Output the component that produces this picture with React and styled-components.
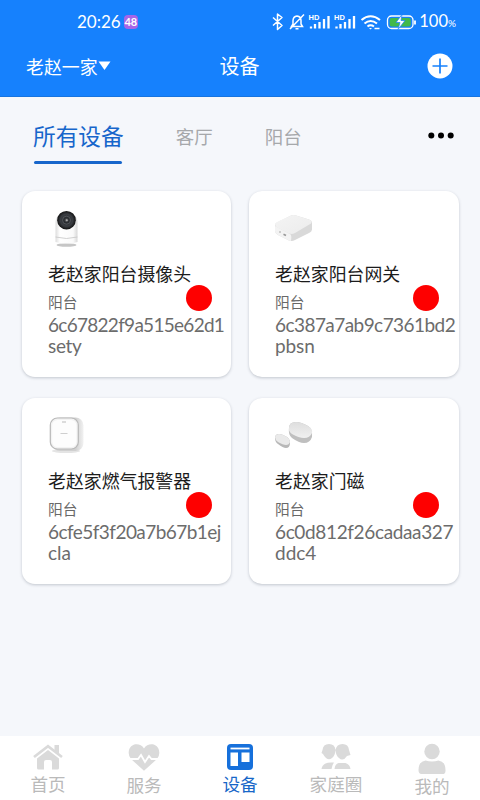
import React from 'react';
import styled, { createGlobalStyle } from 'styled-components';

const Global = createGlobalStyle`
  * { box-sizing: border-box; }
  html, body { margin: 0; padding: 0; }
  body { font-family: "Noto Sans CJK SC", sans-serif; background: #f5f7fb; }
  h1, h2, p { margin: 0; font-weight: 400; }
  button { border: 0; padding: 0; background: none; font: inherit; color: inherit; }
  svg { display: block; flex: none; }
`;

const Screen = styled.div`
  width: 480px;
  height: 800px;
  display: flex;
  flex-direction: column;
  overflow: hidden;
  background: #f5f7fb;
`;

const Header = styled.header`
  height: 97px;
  flex: none;
  background: #1681fd;
  border-bottom: 1px solid #1774df;
  color: #fff;
`;

const StatusBar = styled.div`
  height: 42px;
  padding: 1px 24px 0 77px;
  display: flex;
  align-items: center;
  justify-content: space-between;
`;

const Clock = styled.div`
  display: flex;
  align-items: center;
  gap: 3px;
  font: 400 17px/20px "Lato", sans-serif;
  white-space: nowrap;
`;

const Badge = styled.span`
  width: 14px;
  height: 14px;
  border-radius: 4px;
  display: grid;
  place-items: center;
  background: #a765e8;
  font: 700 11px/14px "Lato", sans-serif;
  letter-spacing: -0.2px;
`;

const StatusIcons = styled.div`
  display: flex;
  align-items: center;
`;

const BatteryText = styled.span`
  font: 400 16.5px/20px "Lato", sans-serif;
  small { font-size: 10px; }
`;

const TitleBar = styled.div`
  height: 48px;
  padding: 0 27px 0 26px;
  display: grid;
  grid-template-columns: 1fr auto 1fr;
  align-items: center;
`;

const HomePicker = styled.button`
  display: flex;
  align-items: center;
  font-size: 17.9px;
  line-height: 24px;
`;

const Title = styled.h1`
  font-size: 20px;
  line-height: 28px;
`;

const AddButton = styled.button`
  justify-self: end;
`;

const Tabs = styled.nav`
  height: 93px;
  flex: none;
  padding: 23px 26px 0 33px;
  display: flex;
  align-items: flex-start;
`;

const Tab = styled.button`
  height: 44px;
  display: flex;
  flex-direction: column;
  align-items: center;
  justify-content: space-between;
  margin-right: ${(p) => p.$gap}px;
  color: ${(p) => (p.$active ? '#1766cb' : '#a6a8ab')};
  font-size: ${(p) => (p.$active ? 22.7 : 18.5)}px;
  line-height: 32px;
  &::after {
    content: "";
    width: 88px;
    height: 3px;
    display: ${(p) => (p.$active ? 'block' : 'none')};
    border-radius: 2px;
    background: #1766cb;
  }
`;

const MoreButton = styled.button`
  margin: 12px 0 0 auto;
`;

const Grid = styled.main`
  flex: 1;
  padding: 1px 21px 0 22px;
  display: grid;
  grid-template-columns: 209px 210px;
  grid-auto-rows: 186px;
  column-gap: 18px;
  row-gap: 21px;
`;

const Card = styled.article`
  position: relative;
  padding: 18px 0 0 26px;
  border-radius: 13px;
  background: #fff;
  box-shadow: 0 1px 3px rgba(45, 55, 75, 0.25);
`;

const DeviceName = styled.h2`
  margin-top: 13px;
  font-size: 17.9px;
  line-height: 26px;
  color: #1c1c1c;
  white-space: nowrap;
`;

const Room = styled.p`
  margin-top: 5px;
  font-size: 14.7px;
  line-height: 22px;
  color: #686868;
`;

const DeviceId = styled.p`
  display: flex;
  flex-direction: column;
  margin-top: 1px;
  font: 400 19px/21px "Lato", sans-serif;
  color: #6c6c6c;
`;

const IdLine = styled.span`
  letter-spacing: ${(p) => p.$spacing}px;
  white-space: nowrap;
`;

const StatusDot = styled.span`
  position: absolute;
  left: 164px;
  top: 94px;
  width: 26px;
  height: 26px;
  border-radius: 50%;
  background: #fe0000;
`;

const BottomNav = styled.nav`
  height: 64px;
  flex: none;
  display: grid;
  grid-template-columns: repeat(5, 1fr);
  background: #fff;
`;

const NavItem = styled.button`
  display: flex;
  flex-direction: column;
  align-items: center;
  padding-top: 6px;
  color: ${(p) => (p.$active ? '#1670db' : '#dadada')};
`;

const NavLabel = styled.span`
  margin-top: ${(p) => p.$offset}px;
  font-size: 17.6px;
  line-height: 24px;
  color: ${(p) => (p.$active ? '#1767c8' : '#bababa')};
`;

const StatusGlyphs = () => (
  <svg width="148" height="24" viewBox="272 9.5 148 24" fill="none" stroke="#fff" strokeWidth="1.5">
    <path d="M274 17l9 8-4.500 4V13.500l4.500 3.500-9 8" strokeLinejoin="round" />
    <path d="M292.500 26H303.500L302 23.500V20q0-4-4-4.500-3.800.5-4 4.500v3.500zM291 28.500L305 14M296.500 28.200h3" />
    {[310, 335.500].map((x) => (
      <g key={x}>
        <text x={x - 0.500} y="19.500" fill="#fff" stroke="none" fontFamily="Liberation Sans" fontWeight="700" fontSize="7.500">HD</text>
        <path d={`M${x + 2} 28v-2M${x + 6} 28v-4.500M${x + 10.500} 28v-6.500M${x + 15} 28v-9.500M${x + 19.500} 28v-12.500`} strokeWidth="2.300" />
      </g>
    ))}
    <path d="M362.500 19.500q9-7.500 18.500 0M365.500 23q6-5 12.500 0M368.500 26q3-2.400 6.500 0" strokeWidth="2.100" />
    <path d="M370 27.500h3l-1.500 1.500z" fill="#fff" stroke="none" />
    <path d="M375.500 28h5" strokeWidth="1.500" />
    <rect x="388.500" y="15.500" width="25.500" height="12.500" rx="4" strokeWidth="1.300" />
    <rect x="390.700" y="17.500" width="21" height="8.500" rx="2" fill="#42b94a" stroke="none" />
    <path d="M403 14l-6 8h4l-2 7 7-9h-4z" fill="#fff" stroke="#1681fd" strokeWidth=".7" />
    <path d="M416 20v4" strokeWidth="1.800" />
  </svg>
);

const CameraPicture = () => (
  <svg width="38" height="38" viewBox="0 0 38 38">
    <defs>
      <linearGradient id="camBody"><stop stopColor="#ddd" /><stop offset=".2" stopColor="#fff" /><stop offset=".8" stopColor="#fafafa" /><stop offset="1" stopColor="#d8d8d8" /></linearGradient>
      <radialGradient id="lens"><stop stopColor="#777" /><stop offset=".25" stopColor="#292c30" /><stop offset=".65" stopColor="#3a3d42" /><stop offset="1" stopColor="#111" /></radialGradient>
    </defs>
    <ellipse cx="18.500" cy="36" rx="10" ry="1.800" fill="#c6c6c6" />
    <path d="M7.500 14q0-10 11-10t11 10v19q-10 3-22 0z" fill="url(#camBody)" />
    <path d="M7.500 28q11 3 22 0" fill="none" stroke="#c5c5c5" strokeWidth=".8" />
    <circle cx="18.500" cy="11.200" r="9.300" fill="url(#lens)" />
    <circle cx="18.500" cy="11.200" r="4" fill="none" stroke="#5d6064" strokeWidth=".7" />
    <circle cx="18.800" cy="11.200" r="1" fill="#aaa" />
  </svg>
);

const GatewayPicture = () => (
  <svg width="38" height="38" viewBox="0 0 38 38">
    <defs><linearGradient id="gwTop" x2="1" y2="1"><stop stopColor="#f4f4f4" /><stop offset="1" stopColor="#ececec" /></linearGradient></defs>
    <path d="M0 16q0-2 3-3L15 7q3-1.500 6-.5l13 4q3 1 3 3v7q0 2-3 3.500L20 31q-3 1.500-6 .5L3 26q-3-1.500-3-4z" fill="#d9d9d9" />
    <path d="M0 17l15 8q2 1 1 7l-2-.5L3 26q-3-1.500-3-4z" fill="#f3f3f3" />
    <path d="M0 15.500q0-1.500 3-3L15 7q3-1.500 6-.5l13 4q4 1.500 2 4L20 24q-3 1.500-6 .5L2 18.500q-2-1.500-2-3z" fill="url(#gwTop)" />
    <path d="M5 22v2" stroke="#aaa" /><path d="M8.500 25.200l2.500 1.300" stroke="#999" strokeWidth="1.600" />
  </svg>
);

const AlarmPicture = () => (
  <svg width="38" height="38" viewBox="0 0 38 38">
    <defs><linearGradient id="alarmSide"><stop offset=".75" stopColor="#d0d0d0" /><stop offset="1" stopColor="#f2f2f2" /></linearGradient></defs>
    <ellipse cx="18" cy="35" rx="14" ry="2" fill="#e4e4e4" />
    <rect x="4" y="1.500" width="31.500" height="33.500" rx="8" fill="url(#alarmSide)" />
    <rect x="2.300" y="2" width="28" height="31" rx="7" fill="#f3f3f3" stroke="#b9b9b9" strokeWidth="1.200" />
    <rect x="4.200" y="4" width="24.200" height="27" rx="5.500" fill="#fdfdfd" />
    <path d="M14 6h4" stroke="#bbb" /><path d="M12.500 17.500h7" stroke="#cfcfcf" />
  </svg>
);

const SensorPicture = () => (
  <svg width="38" height="38" viewBox="0 0 38 38">
    <defs><linearGradient id="sensorTop" x2="0" y2="1"><stop stopColor="#dedede" /><stop offset="1" stopColor="#f0f0f0" /></linearGradient></defs>
    <path d="M14 12q0-6 7-6 5 0 12 4 5 3 4 11-2 6-8 6-5 0-12-5-4-3-3-10z" fill="#bfbfbf" />
    <path d="M14 12q0-6 7-6 5 0 12 4 5 3 4 7-2 5-8 5-5 0-12-4-4-3-3-6z" fill="url(#sensorTop)" />
    <path d="M0 22q0-4 4-4 3 0 8 3 3 2 3 6 0 5-4 5-3 0-8-4-3-2-3-6z" fill="#b8b8b8" />
    <path d="M0 21q1-3 4-3t8 3q3 2 3 5-1 3-4 3t-8-3q-3-2-3-5z" fill="#eaeaea" />
  </svg>
);

const HomeIcon = () => (
  <svg width="32" height="29" viewBox="0 0 32 29">
    <path d="M2 15L16 4.200 30 15" fill="none" stroke="currentColor" strokeWidth="2.700" />
    <path d="M22.500 3h4.500v9l-4.500-3.500zM16 8L27 16.500V26q0 1.500-1.500 1.500H20V20q0-2-2-2h-4q-2 0-2 2v7.500H6.500Q5 27.500 5 26v-9.500z" fill="currentColor" />
  </svg>
);

const HeartIcon = () => (
  <svg width="32" height="29" viewBox="0 0 32 29">
    <path d="M16 28.800L3 17Q.5 14 .7 10.500C1 1 12 0 16 6.500 20 0 31 1 31.300 10.500Q31.500 14 29 17z" fill="currentColor" />
    <path d="M1 17h9l3-4 4 7 4-6 2.500 3H31" fill="none" stroke="#fff" strokeWidth="1.800" />
  </svg>
);

const DeviceIcon = () => (
  <svg width="28" height="29" viewBox="0 0 28 29">
    <rect x="1" y="2" width="26" height="26" rx="4" fill="currentColor" />
    <path d="M4.500 6.500h19" stroke="#fff" strokeWidth="1.800" />
    <path d="M4.500 10.500H12V24H4.500zM15.500 10.500h8V20h-8z" fill="#fff" />
  </svg>
);

const FamilyIcon = () => (
  <svg width="32" height="29" viewBox="0 0 32 29" fill="currentColor">
    <path d="M9 2q6 0 6.500 6-.5 6-3.500 8-3 2.500-6 0Q4 14 3 12L1.500 11 2.500 8Q3 2 9 2zM22.500 2q6 0 6.500 6l1.500 5-3.500 1q-4 6-8 2-3-2-3.500-8Q16.500 2 22.500 2zM1.500 27q.5-4 4-5.500Q8 20 14 20.500 12 23 11.500 27zM14.500 27q.5-5 4-6h7q4.500 1.500 5 6z" />
  </svg>
);

const ProfileIcon = () => (
  <svg width="30" height="32" viewBox="0 0 30 32" fill="currentColor">
    <circle cx="15" cy="9.500" r="7.700" />
    <path d="M1.500 28q0-8.500 7-9.500 6.500 2 13 0 7 1 7 9.500.3 4-3 4h-21q-3 0-3-4z" />
  </svg>
);

const devices = [
  { name: '老赵家阳台摄像头', lines: [['6c67822f9a515e62d1', -0.72], ['sety', -0.3]], Picture: CameraPicture },
  { name: '老赵家阳台网关', lines: [['6c387a7ab9c7361bd2', -0.56], ['pbsn', -0.1]], Picture: GatewayPicture },
  { name: '老赵家燃气报警器', lines: [['6cfe5f3f20a7b67b1ej', -0.55], ['cla', 0]], Picture: AlarmPicture },
  { name: '老赵家门磁', lines: [['6c0d812f26cadaa327', -0.36], ['ddc4', 0]], Picture: SensorPicture },
];

const navItems = [
  { label: '首页', Icon: HomeIcon, offset: 1 },
  { label: '服务', Icon: HeartIcon, offset: 2 },
  { label: '设备', Icon: DeviceIcon, offset: 1, active: true },
  { label: '家庭圈', Icon: FamilyIcon, offset: 1 },
  { label: '我的', Icon: ProfileIcon, offset: 0 },
];

export default function App() {
  return (
    <Screen>
      <Global />
      <Header>
        <StatusBar>
          <Clock>20:26 <Badge>48</Badge></Clock>
          <StatusIcons>
            <StatusGlyphs />
            <BatteryText>100<small>%</small></BatteryText>
          </StatusIcons>
        </StatusBar>
        <TitleBar>
          <HomePicker>
            老赵一家
            <svg width="13" height="10" viewBox="0 0 13 10"><path d="M.5 .5h12L6.500 9z" fill="#fff" /></svg>
          </HomePicker>
          <Title>设备</Title>
          <AddButton aria-label="添加">
            <svg width="26" height="26" viewBox="0 0 26 26">
              <circle cx="13" cy="13" r="12.500" fill="#fff" />
              <path d="M5.500 13h15M13 5.500v15" stroke="#1681fd" strokeWidth="1.700" />
            </svg>
          </AddButton>
        </TitleBar>
      </Header>
      <Tabs>
        <Tab $active $gap={52}>所有设备</Tab>
        <Tab $gap={52}>客厅</Tab>
        <Tab $gap={0}>阳台</Tab>
        <MoreButton aria-label="更多">
          <svg width="26" height="7" viewBox="0 0 26 7"><circle cx="3.300" cy="3.500" r="3" /><circle cx="13" cy="3.500" r="3" /><circle cx="22.700" cy="3.500" r="3" /></svg>
        </MoreButton>
      </Tabs>
      <Grid>
        {devices.map(({ name, lines, Picture }) => (
          <Card key={name}>
            <Picture />
            <DeviceName>{name}</DeviceName>
            <Room>阳台</Room>
            <DeviceId>
              {lines.map(([text, spacing]) => <IdLine key={text} $spacing={spacing}>{text}</IdLine>)}
            </DeviceId>
            <StatusDot />
          </Card>
        ))}
      </Grid>
      <BottomNav>
        {navItems.map(({ label, Icon, offset, active }) => (
          <NavItem key={label} $active={active}>
            <Icon />
            <NavLabel $active={active} $offset={offset}>{label}</NavLabel>
          </NavItem>
        ))}
      </BottomNav>
    </Screen>
  );
}
